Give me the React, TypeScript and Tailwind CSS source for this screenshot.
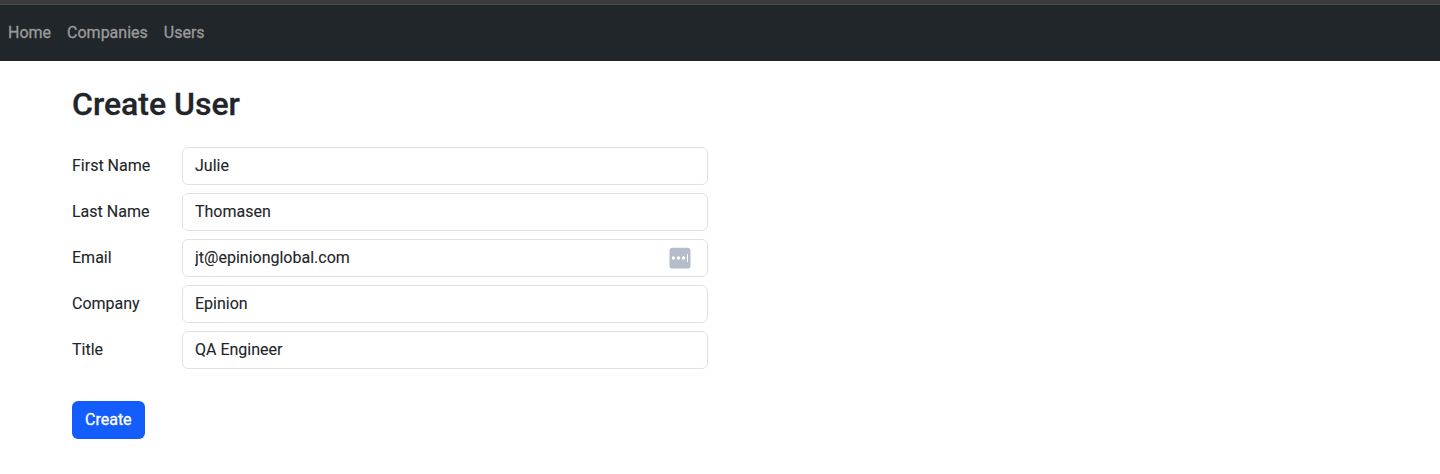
const fields = [
  { label: "First Name", value: "Julie" },
  { label: "Last Name", value: "Thomasen" },
  { label: "Email", value: "jt@epinionglobal.com" },
  { label: "Company", value: "Epinion" },
  { label: "Title", value: "QA Engineer" },
];

function PasswordManagerIcon() {
  return (
    <svg width="22" height="22" viewBox="0 0 22 22" className="absolute top-2 right-[17px]">
      <rect x="0.5" y="0.8" width="21" height="20.8" rx="3.2" fill="#b5bdcb" />
      <circle cx="4.4" cy="11" r="1.65" fill="#fff" />
      <circle cx="9.5" cy="11" r="1.65" fill="#fff" />
      <circle cx="14.6" cy="11" r="1.65" fill="#fff" />
      <rect x="18" y="7" width="1" height="8" fill="#fff" />
    </svg>
  );
}

export default function App() {
  return (
    <div className="min-h-[474px] bg-white font-['Roboto',sans-serif] text-base text-[#212529] [-webkit-text-stroke:0.1px]">
      <div className="h-[5px] border-b border-[#4a4c4b] bg-[#3c3b3c]" />
      <nav className="flex h-14 items-center gap-4 bg-[#20262a] px-2 text-[#9b9b9c] [-webkit-text-stroke:0.3px]">
        <a href="#">Home</a>
        <a href="#">Companies</a>
        <a href="#">Users</a>
      </nav>
      <main className="px-[72px] pt-6">
        <h1 className="text-[32px] leading-[38px] font-medium [-webkit-text-stroke:0.3px]">Create User</h1>
        <form className="mt-6">
          <div className="flex flex-col gap-2">
            {fields.map((f) => (
              <label key={f.label} className="flex items-center">
                <span className="w-[110px]">{f.label}</span>
                <span className="relative">
                  <input
                    defaultValue={f.value}
                    className="h-[38px] w-[526px] rounded-md border border-[#dee2e6] px-3 pb-0.5"
                  />
                  {f.label === "Email" && <PasswordManagerIcon />}
                </span>
              </label>
            ))}
          </div>
          <button
            type="button"
            className="mt-8 h-[38px] rounded-md bg-[#145dfd] px-[13px] text-white [-webkit-text-stroke:0.3px]"
          >
            Create
          </button>
        </form>
      </main>
    </div>
  );
}
